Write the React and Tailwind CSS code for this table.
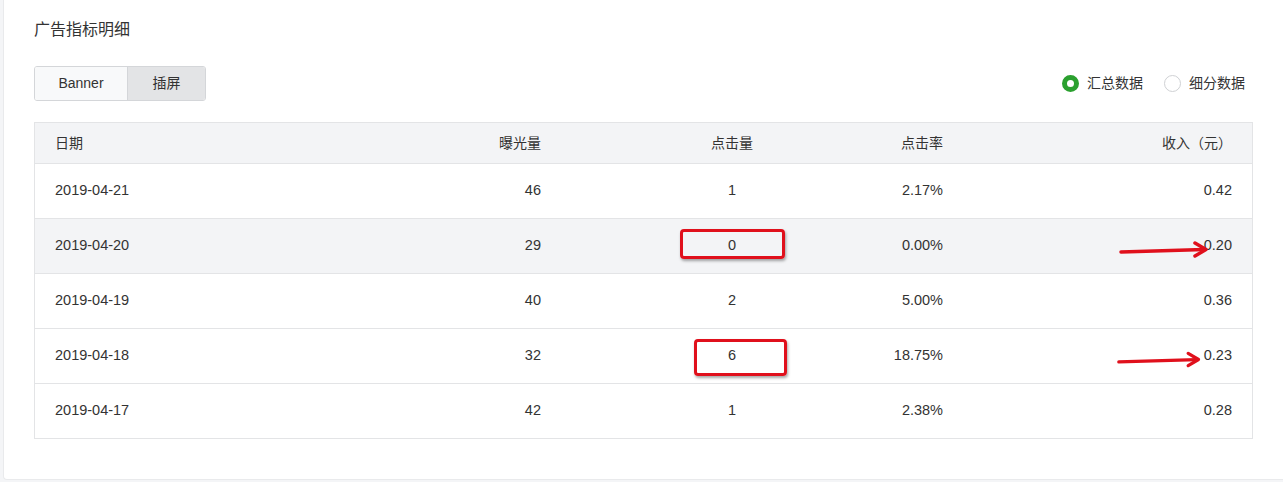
import React from "react";

const rows = [
  ["2019-04-21", "46", "1", "2.17%", "0.42"],
  ["2019-04-20", "29", "0", "0.00%", "0.20"],
  ["2019-04-19", "40", "2", "5.00%", "0.36"],
  ["2019-04-18", "32", "6", "18.75%", "0.23"],
  ["2019-04-17", "42", "1", "2.38%", "0.28"],
];

const font = { fontFamily: '"Liberation Sans", "Noto Sans CJK SC", sans-serif' };

function Arrow({ className }) {
  return (
    <svg className={className} width="96" height="22" viewBox="0 0 96 22" fill="none">
      <path d="M3 13 L86 10.5" stroke="#e0101c" strokeWidth="3.5" strokeLinecap="round" />
      <path d="M77 4 L88 10.5 L77 17" stroke="#e0101c" strokeWidth="3.5" strokeLinecap="round" strokeLinejoin="round" />
    </svg>
  );
}

export default function App() {
  return (
    <div className="w-[1283px] h-[482px] bg-[#f4f5f7] pl-[3px] overflow-hidden" style={font}>
      <div className="h-[480px] bg-white rounded-bl-[4px] border-l border-b border-[#e9eaec] pl-[30px] pr-[29px] pt-[19px] text-[#333]">
        <div className="h-[22px] flex items-center text-[16px] text-[#333]">广告指标明细</div>
        <div className="mt-[25px] flex items-center justify-between h-[35px]">
          <div className="flex h-[35px] rounded-[3px] border border-[#d4d6d9] overflow-hidden text-[14px]">
            <div className="w-[93px] flex items-center justify-center bg-[#f8f9fa] text-[#333] border-r border-[#d4d6d9]">Banner</div>
            <div className="w-[77px] flex items-center justify-center bg-[#e3e4e6] text-[#333]">插屏</div>
          </div>
          <div className="flex items-center text-[14px] text-[#333] pr-[9px]">
            <span className="w-[17px] h-[17px] rounded-full border-[5px] border-[#2ba02f] bg-white"></span>
            <span className="ml-[8px]">汇总数据</span>
            <span className="ml-[21px] w-[17px] h-[17px] rounded-full border border-[#cfd1d4] bg-white"></span>
            <span className="ml-[8px]">细分数据</span>
          </div>
        </div>
        <div className="mt-[21px] w-[1219px] border border-[#e3e4e6] text-[14.5px] relative">
          <div className="grid grid-cols-[346px_180px_302px_100px_1fr] h-[41px] bg-[#f3f4f6] border-b border-[#e3e4e6] items-center text-[14px] text-[#333]">
            <div className="pl-[20px]">日期</div>
            <div className="pr-[20px] text-right">曝光量</div>
            <div className="pl-[40px] text-center">点击量</div>
            <div className="pr-[20px] text-right whitespace-nowrap">点击率</div>
            <div className="pr-[20px] text-right">收入（元）</div>
          </div>
          {rows.map((r, i) => (
            <div
              key={r[0]}
              className={`grid grid-cols-[346px_180px_302px_100px_1fr] items-center text-[#333] ${i < rows.length - 1 ? "h-[55px] border-b border-[#e3e4e6]" : "h-[54px]"} ${i === 1 ? "bg-[#f3f4f6]" : "bg-white"}`}
            >
              <div className="pl-[20px]">{r[0]}</div>
              <div className="pr-[20px] text-right">{r[1]}</div>
              <div className="pl-[40px] text-center">{r[2]}</div>
              <div className="pr-[20px] text-right whitespace-nowrap">{r[3]}</div>
              <div className="pr-[20px] text-right">{r[4]}</div>
            </div>
          ))}
          <div className="absolute left-[645px] top-[106px] w-[105px] h-[30px] rounded-[4px] border-[3px] border-[#e0101c] shadow-[1px_2px_3px_rgba(0,0,0,0.35)]"></div>
          <div className="absolute left-[659px] top-[216px] w-[93px] h-[37px] rounded-[4px] border-[3px] border-[#e0101c] shadow-[1px_2px_3px_rgba(0,0,0,0.35)]"></div>
          <Arrow className="absolute left-[1083px] top-[116px]" />
          <Arrow className="absolute left-[1081px] top-[226px] w-[90px]" />
        </div>
      </div>
    </div>
  );
}
